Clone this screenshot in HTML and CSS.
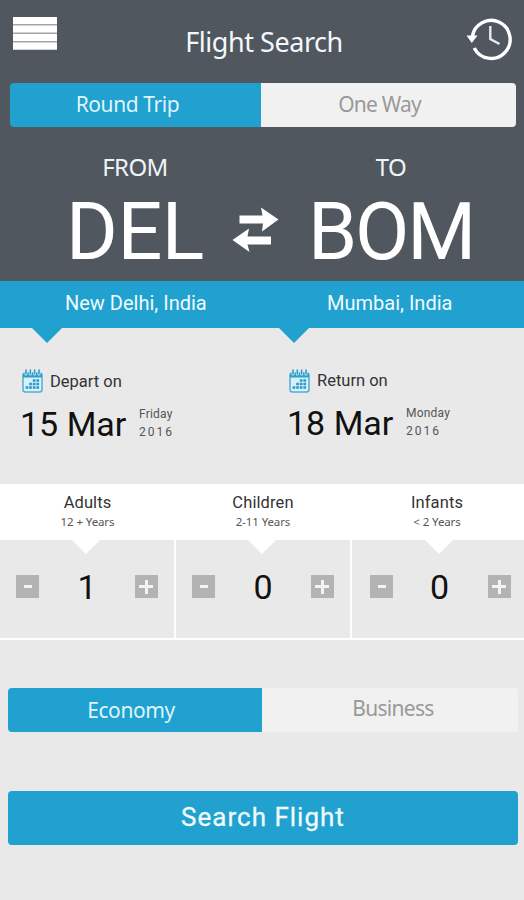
FILE: index.html
```
<!DOCTYPE html>
<html lang="en">
<head>
<meta charset="utf-8">
<title>Flight Search</title>
<link rel="stylesheet" href="styles.css">
</head>
<body>
<svg width="0" height="0" class="defs">
  <symbol id="calendar" viewBox="0 0 21 24">
    <rect x="1" y="4" width="19" height="19" rx="2.5" fill="#d9f0f8" stroke="#4db0d5" stroke-width="1.5"/>
    <path d="M1 8.500V5.500Q1 3.500 3 3.500H18Q20 3.500 20 5.500V8.500Z" fill="#2ba0cc"/>
    <path d="M4 1.200V5M8.300 1.200V5M12.600 1.200V5M17 1.200V5" stroke="#e9e9e9" stroke-width="3" stroke-linecap="round"/>
    <path d="M4 1V5M8.300 1V5M12.600 1V5M17 1V5" stroke="#2ba0cc" stroke-width="1.600" stroke-linecap="round"/>
    <path d="M10.800 11.500H17.800M7.200 15H17.800M3.600 18.500H17.800" stroke="#249bc8" stroke-width="2.500" stroke-dasharray="2.700 .9"/>
  </symbol>
</svg>
<main class="app">
  <header class="top">
    <div class="titlebar">
      <svg class="menu" viewBox="0 0 44 33" width="44" height="33">
        <path d="M0 0H44V33H0Z" fill="#a3a6a9"/>
        <path d="M0 3.500H44M0 12H44M0 20.500H44M0 29H44" stroke="#fff" stroke-width="6.800"/>
      </svg>
      <h1>Flight Search</h1>
      <svg class="history" viewBox="0 0 46 44" width="46" height="44">
        <path d="M6.300 20A19 19 0 1 1 8.200 31" fill="none" stroke="#fff" stroke-width="3.400"/>
        <path d="M.5 18.500L11.500 18.500L5.800 26Z" fill="#fff"/>
        <path d="M24.300 9V22L33.500 27" fill="none" stroke="#e8ecef" stroke-width="2.400"/>
      </svg>
    </div>
    <div class="seg trip"><div class="on"><span class="t-round">Round Trip</span></div><div class="off"><span class="t-one">One Way</span></div></div>
    <div class="route">
      <div class="stop from"><span class="dir">FROM</span><span class="code">DEL</span></div>
      <svg class="swap" viewBox="0 0 48 46" width="48" height="46">
        <path d="M7.500 9.500H30.500L29 1.500L46.500 13.500L30 25.500L31 17.500H7.500Z" fill="#fff"/>
        <path d="M39 30.500H15.500L17 22.500L.5 34L17.500 46L15.500 38.500H39Z" fill="#fff"/>
      </svg>
      <div class="stop to"><span class="dir">TO</span><span class="code">BOM</span></div>
    </div>
  </header>
  <div class="cities"><div class="city c1"><span>New Delhi, India</span></div><div class="city c2"><span>Mumbai, India</span></div></div>
  <section class="dates">
    <div class="date">
      <div class="label"><svg width="21" height="24"><use href="#calendar"/></svg><span>Depart on</span></div>
      <div class="value"><span class="day">15 Mar</span><div class="sub"><span class="wd">Friday</span><span class="yr">2016</span></div></div>
    </div>
    <div class="date ret">
      <div class="label"><svg width="21" height="24"><use href="#calendar"/></svg><span>Return on</span></div>
      <div class="value"><span class="day">18 Mar</span><div class="sub"><span class="wd">Monday</span><span class="yr">2016</span></div></div>
    </div>
  </section>
  <section class="pax">
    <div class="col a"><div class="head"><b>Adults</b><small>12 + Years</small></div><div class="count"><button class="minus"></button><span>1</span><button class="plus"></button></div></div>
    <div class="col b"><div class="head"><b>Children</b><small>2-11 Years</small></div><div class="count"><button class="minus"></button><span>0</span><button class="plus"></button></div></div>
    <div class="col c"><div class="head"><b>Infants</b><small>&lt; 2 Years</small></div><div class="count"><button class="minus"></button><span>0</span><button class="plus"></button></div></div>
  </section>
  <div class="seg cabin"><div class="on"><span class="t-eco">Economy</span></div><div class="off"><span class="t-bus">Business</span></div></div>
  <button class="search"><span>Search Flight</span></button>
</main>
</body>
</html>
```
FILE: styles.css
```
* { box-sizing: border-box; }
body { margin: 0; background: #e9e9e9; font-family: Roboto, "Liberation Sans", sans-serif; color: #111; }
.defs { display: block; height: 0; }
.app { width: 524px; height: 900px; overflow: hidden; }
.app span, h1, b, small { white-space: nowrap; display: block; }
.top { background: #50575f; height: 281px; }
.titlebar { display: grid; grid-template-columns: 176px 176px 1fr; height: 83px; }
.menu { margin: 17px 0 0 13px; }
h1 { margin: 23px 0 0; font: 400 27px/38px "Noto Sans", sans-serif; letter-spacing: -.45px; color: #f4f8fb; text-align: center; }
.history { margin: 17px 0 0 114px; }
.seg { display: grid; font: 21px/43px "Noto Sans", sans-serif; letter-spacing: -.4px; text-align: center; overflow: hidden; border-radius: 4px; }
.trip { grid-template-columns: 251px 1fr; width: 506px; height: 44px; margin-left: 10px; }
.on { background: #20a1cf; color: #dff4fc; }
.off { background: #f1f1f1; color: #999; }
.t-round { padding-right: 16px; }
.t-one { padding-right: 18px; letter-spacing: -.8px; }
.route { display: flex; height: 154px; }
.stop { text-align: center; color: #fff; padding-top: 20px; }
.from { width: 232px; padding-left: 38px; }
.to { width: 222px; }
.dir { font: 24px/39px "Noto Sans", sans-serif; letter-spacing: -.6px; color: #eef4f8; }
.code { font-size: 79px; line-height: 92px; letter-spacing: -.5px; }
.to .code { letter-spacing: -2.200px; }
.swap { margin-top: 79px; }
.cities { display: grid; grid-template-columns: 247px 1fr; background: #20a1cf; height: 47px; color: #effaff; font-size: 20px; line-height: 45px; }
.city { position: relative; }
.c1 { padding-left: 65px; }
.c2 { padding-left: 80px; }
.city::after { content: ""; position: absolute; left: 32px; top: 47px; border: 15px solid transparent; border-top-color: #20a1cf; border-bottom: 0; }
.dates { display: grid; grid-template-columns: 267px 1fr; height: 156px; padding: 41px 0 0 20px; }
.label { display: flex; gap: 7px; padding-left: 2px; height: 24px; font-size: 16.500px; line-height: 25px; color: #333; }
.ret .label { line-height: 23px; }
.value { display: flex; }
.day { font-size: 34px; line-height: 40px; width: 118px; margin-top: 11px; }
.ret .value { margin-top: -1px; }
.sub { padding-top: 12px; color: #555; font-size: 12px; line-height: 18px; padding-left: 1px; }
.wd { letter-spacing: .2px; }
.yr { letter-spacing: 2px; }
.pax { display: grid; grid-template-columns: 174px 174px 172px; gap: 2px; background: #fff; height: 156px; padding-bottom: 2px; }
.head { position: relative; height: 56px; text-align: center; padding-top: 9px; }
.a .head { padding-left: 1px; }
.c .head { padding-right: 2px; }
.head::after { content: ""; position: absolute; left: 72px; top: 56px; border: 14px solid transparent; border-top-color: #fff; border-bottom: 0; }
.c .head::after { left: 73px; }
b { font-weight: 400; font-size: 16.500px; line-height: 20px; letter-spacing: .1px; color: #333; }
small { font: 11.500px/18px "Noto Sans", sans-serif; letter-spacing: -.1px; color: #555; }
.count { display: flex; justify-content: space-between; background: #e9e9e9; height: 98px; padding: 35px 16px 0; }
.c .count { padding: 35px 13px 0 18px; }
.count span { font-size: 34px; line-height: 25px; }
.c .count span { padding-right: 2px; }
.count button { width: 23px; height: 23px; border: 0; padding: 0; background: linear-gradient(#f4f4f4, #f4f4f4) center/8px 3px no-repeat #b3b3b3; }
.count .plus { background: linear-gradient(#f4f4f4, #f4f4f4) center/14px 3px no-repeat, linear-gradient(#f4f4f4, #f4f4f4) center/3px 14px no-repeat #b3b3b3; }
.cabin { grid-template-columns: 254px 1fr; width: 510px; height: 44px; margin: 48px 0 0 8px; }
.t-eco { padding-right: 8px; line-height: 44px; }
.t-bus { line-height: 41px; padding-left: 6px; letter-spacing: -.7px; }
.search { display: block; margin: 59px 0 0 8px; width: 510px; height: 54px; border: 0; border-radius: 4px; background: #20a1cf; color: #effaff; font: 26px/51px Roboto, sans-serif; -webkit-text-stroke: .3px #effaff; letter-spacing: 1px; padding: 0 0 2px; }
```
